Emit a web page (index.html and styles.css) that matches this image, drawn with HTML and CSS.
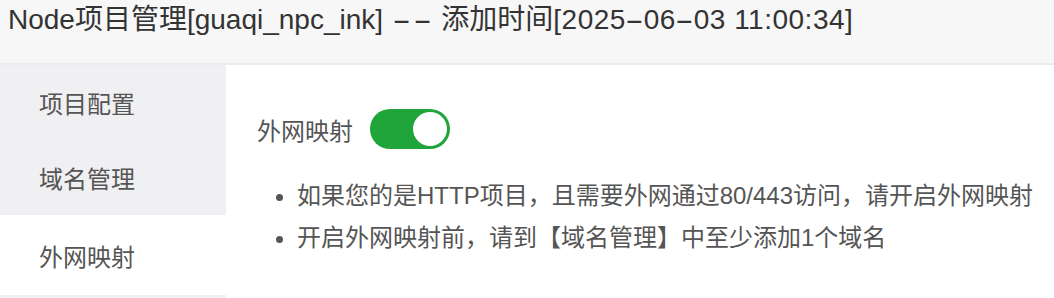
FILE: index.html
```html
<!DOCTYPE html>
<html lang="zh-CN">
<head>
<meta charset="utf-8">
<title>Node项目管理</title>
<link rel="stylesheet" href="styles.css">
</head>
<body>
<div class="page">
  <header class="title-bar">Node项目管理[guaqi_npc_ink] <span class="dash wide">-</span><span class="dash wide">-</span> 添加时间<span class="date">[2025<span class="dash">-</span>06<span class="dash">-</span>03 11:00:34]</span></header>
  <div class="main">
    <nav class="sidebar">
      <div class="nav-item">项目配置</div>
      <div class="nav-item">域名管理</div>
      <div class="nav-item active">外网映射</div>
    </nav>
    <section class="content">
      <div class="switch-row">
        <span class="switch-label">外网映射</span>
        <span class="switch on"><span class="knob"></span></span>
      </div>
      <ul class="tips">
        <li>如果您的是HTTP项目，且需要外网通过80/443访问，请开启外网映射</li>
        <li>开启外网映射前，请到【域名管理】中至少添加1个域名</li>
      </ul>
    </section>
  </div>
</div>
</body>
</html>
```

FILE: styles.css
```css
* { box-sizing: border-box; }
html, body {
  margin: 0;
  padding: 0;
  background: #ffffff;
}
body {
  font-family: "Liberation Sans", "Noto Sans CJK SC", sans-serif;
  color: #555555;
  overflow: hidden;
}
.page {
  width: 1054px;
  height: 298px;
  overflow: hidden;
}
.title-bar {
  height: 65px;
  background: #f7f7f7;
  border-bottom: 2px solid #ececec;
  padding: 1px 8px 0;
  font-size: 28px;
  line-height: 38px;
  color: #333333;
  white-space: nowrap;
}
.date {
  letter-spacing: 0.5px;
}
.dash {
  display: inline-block;
  transform: scaleX(2);
  margin: 0 4px;
}
.dash.wide {
  margin: 0 6px;
}
.main {
  display: flex;
  height: 233px;
}
.sidebar {
  width: 226px;
  flex: none;
  background: #f0eff2;
  display: flex;
  flex-direction: column;
}
.nav-item {
  height: 75px;
  flex: none;
  display: flex;
  align-items: center;
  padding-left: 39px;
  font-size: 24px;
  color: #555555;
}
.nav-item.active {
  height: 80px;
  background: #ffffff;
}
.content {
  flex: 1;
  padding: 44px 0 0 31px;
}
.switch-row {
  display: flex;
  align-items: center;
  height: 40px;
  gap: 17px;
}
.switch-label {
  font-size: 24px;
  color: #555555;
}
.switch {
  width: 80px;
  height: 40px;
  border-radius: 20px;
  background: #20a53a;
  padding: 3px;
  display: flex;
  justify-content: flex-end;
}
.knob {
  width: 34px;
  height: 34px;
  border-radius: 50%;
  background: #ffffff;
}
.tips {
  margin: 26px 0 0;
  padding-left: 40px;
  list-style: disc;
  font-size: 24px;
  line-height: 42px;
  color: #555555;
  white-space: nowrap;
}
```
